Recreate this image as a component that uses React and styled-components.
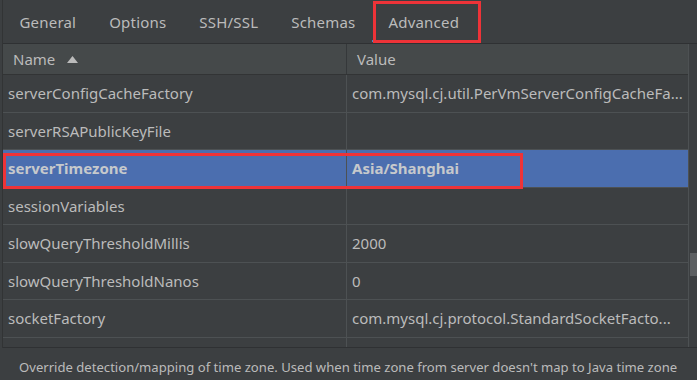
import styled, {createGlobalStyle} from "styled-components";

const GlobalStyle = createGlobalStyle`
  html, body {
    margin: 0;
    padding: 0;
    background: #3c3f41;
  }
  * {
    box-sizing: border-box;
  }
`

const Root = styled.div`
  position: relative;
  width: 697px;
  height: 380px;
  overflow: hidden;
  display: flex;
  flex-direction: column;
  background: #3c3f41;
  color: #bbbbbb;
  font-family: "Noto Sans", "Open Sans", sans-serif;
  font-size: 15px;
`

const Main = styled.div`
  height: 348px;
  margin-left: 2px;
  border-left: 1px solid #323435;
  display: flex;
  flex-direction: column;
`

const TabBar = styled.div`
  height: 44px;
  flex-shrink: 0;
  display: flex;
  border-bottom: 1px solid #2f3133;
`

const Tab = styled.div`
  position: relative;
  display: flex;
  align-items: center;
  padding: 1px 16.5px 0;
  letter-spacing: 0.2px;
  white-space: nowrap;
  color: #bbbbbb;

  &::after {
    content: "";
    display: ${p => (p.$active ? "block" : "none")};
    position: absolute;
    left: 0;
    right: 0;
    bottom: 1px;
    height: 2px;
    background: #4a88c7;
  }
`

const TableWrap = styled.div`
  flex: 1;
  display: flex;
  border-bottom: 1px solid #2f3133;
  min-height: 0;
`

const Table = styled.div`
  flex: 1;
  display: flex;
  flex-direction: column;
  overflow: hidden;
`

const HeaderRow = styled.div`
  height: 31px;
  flex-shrink: 0;
  display: grid;
  grid-template-columns: 343px 1fr;
  background: #45494a;
  border-bottom: 1px solid #323435;
`

const HeaderCell = styled.div`
  display: flex;
  align-items: center;
  gap: 12px;
  padding-left: 10px;
  border-left: ${p => (p.$first ? "none" : "1px solid #35383a")};
`

const Row = styled.div`
  height: 37.5px;
  flex-shrink: 0;
  display: grid;
  grid-template-columns: 343px 1fr;
  background: ${p => (p.$selected ? "#4b6eaf" : "transparent")};
  border-bottom: 1px solid #4d5153;
  font-weight: ${p => (p.$selected ? 700 : 400)};
  color: ${p => (p.$selected ? "#c6c9cc" : "#bbbbbb")};
`

const Cell = styled.div`
  display: flex;
  align-items: center;
  padding-left: 5px;
  white-space: nowrap;
  overflow: hidden;
  border-left: ${p => (p.$first ? "none" : "1px solid #4d5153")};
`

const Scrollbar = styled.div`
  position: relative;
  width: 9px;
  flex-shrink: 0;
  border-left: 1px solid #4d5153;
`

const Thumb = styled.div`
  position: absolute;
  right: 0;
  top: 209px;
  width: 7px;
  height: 23px;
  background: #5c5f61;
`

const Description = styled.div`
  flex: 1;
  display: flex;
  align-items: flex-end;
  padding: 0 0 4px 19px;
  white-space: nowrap;
  font-size: 13.1px;
  color: #bbbbbb;
`

const Marker = styled.div`
  position: absolute;
  border: 3px solid #ee3338;
  pointer-events: none;
`

const tabs = ["General", "Options", "SSH/SSL", "Schemas", "Advanced"]

const rows = [
    ["serverConfigCacheFactory", "com.mysql.cj.util.PerVmServerConfigCacheFa..."],
    ["serverRSAPublicKeyFile", ""],
    ["serverTimezone", "Asia/Shanghai", true],
    ["sessionVariables", ""],
    ["slowQueryThresholdMillis", "2000"],
    ["slowQueryThresholdNanos", "0"],
    ["socketFactory", "com.mysql.cj.protocol.StandardSocketFacto..."],
    ["", ""],
]

function SortUp() {
    return (
        <svg width="11" height="7" viewBox="0 0 11 7">
            <path d="M0 7 L5.5 0 L11 7 Z" fill="#bbbbbb"/>
        </svg>
    )
}

export default function App() {
    return (<Root>
        <GlobalStyle/>
        <Main>
            <TabBar>
                {tabs.map(t => (
                    <Tab key={t} $active={t === "Advanced"}>{t}</Tab>
                ))}
            </TabBar>
            <TableWrap>
                <Table>
                    <HeaderRow>
                        <HeaderCell $first>Name <SortUp/></HeaderCell>
                        <HeaderCell>Value</HeaderCell>
                    </HeaderRow>
                    {rows.map(([name, value, selected], i) => (
                        <Row key={i} $selected={selected}>
                            <Cell $first>{name}</Cell>
                            <Cell>{value}</Cell>
                        </Row>
                    ))}
                </Table>
                <Scrollbar>
                    <Thumb/>
                </Scrollbar>
            </TableWrap>
        </Main>
        <Description>
            Override detection/mapping of time zone. Used when time zone from server doesn't map to Java time zone
        </Description>

        {/* red annotation boxes */}
        <Marker style={{left: 373, top: 1, width: 108, height: 42}}/>
        <Marker style={{left: 3, top: 153, width: 520, height: 36}}/>
    </Root>)
}
